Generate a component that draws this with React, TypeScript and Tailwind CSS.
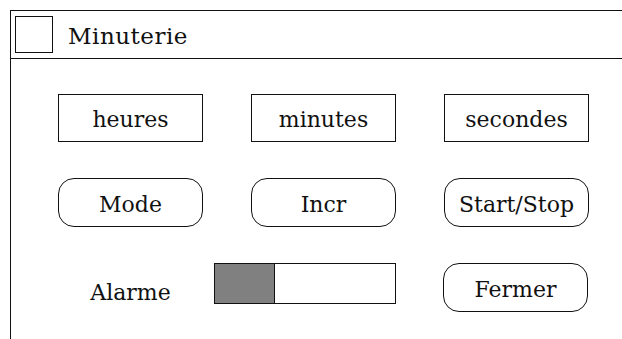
export default function App() {
  return (
    <div className="w-[622px] h-[339px] bg-white overflow-hidden pt-[10px] pl-[10px] font-['DejaVu_Serif','Liberation_Serif',serif]">
      <div className="h-full border-t border-l border-[#111] flex flex-col">
        {/* Title bar */}
        <header className="h-[48px] border-b border-[#111] flex items-center pl-[4px] gap-[15px]">
          <div className="w-[38px] h-[37px] border border-[#111]" />
          <span className="text-[23px] text-[#111] leading-none mt-[3px] tracking-[0.5px]">Minuterie</span>
        </header>

        {/* Body */}
        <main className="pl-[47px] pt-[35px] flex flex-col gap-[36px] text-[22px] text-[#111]">
          <div className="flex gap-[48px]">
            {['heures', 'minutes', 'secondes'].map((t) => (
              <div key={t} className="w-[145px] h-[48px] border border-[#111] flex items-center justify-center pt-[3px]">
                {t}
              </div>
            ))}
          </div>

          <div className="flex gap-[48px]">
            {['Mode', 'Incr', 'Start/Stop'].map((t) => (
              <button key={t} className="w-[145px] h-[49px] border border-[#111] rounded-[16px] flex items-center justify-center pt-[3px] whitespace-nowrap">
                {t}
              </button>
            ))}
          </div>

          <div className="flex items-start">
            <div className="w-[145px] h-[48px] flex items-center justify-center pt-[10px]">Alarme</div>
            <div className="ml-[11px] w-[182px] h-[41px] border border-[#111] flex">
              <div className="w-[60px] h-full bg-[#808080] border-r border-[#111]" />
            </div>
            <button className="ml-[47px] w-[145px] h-[49px] border border-[#111] rounded-[16px] flex items-center justify-center pt-[3px]">
              Fermer
            </button>
          </div>
        </main>
      </div>
    </div>
  );
}
